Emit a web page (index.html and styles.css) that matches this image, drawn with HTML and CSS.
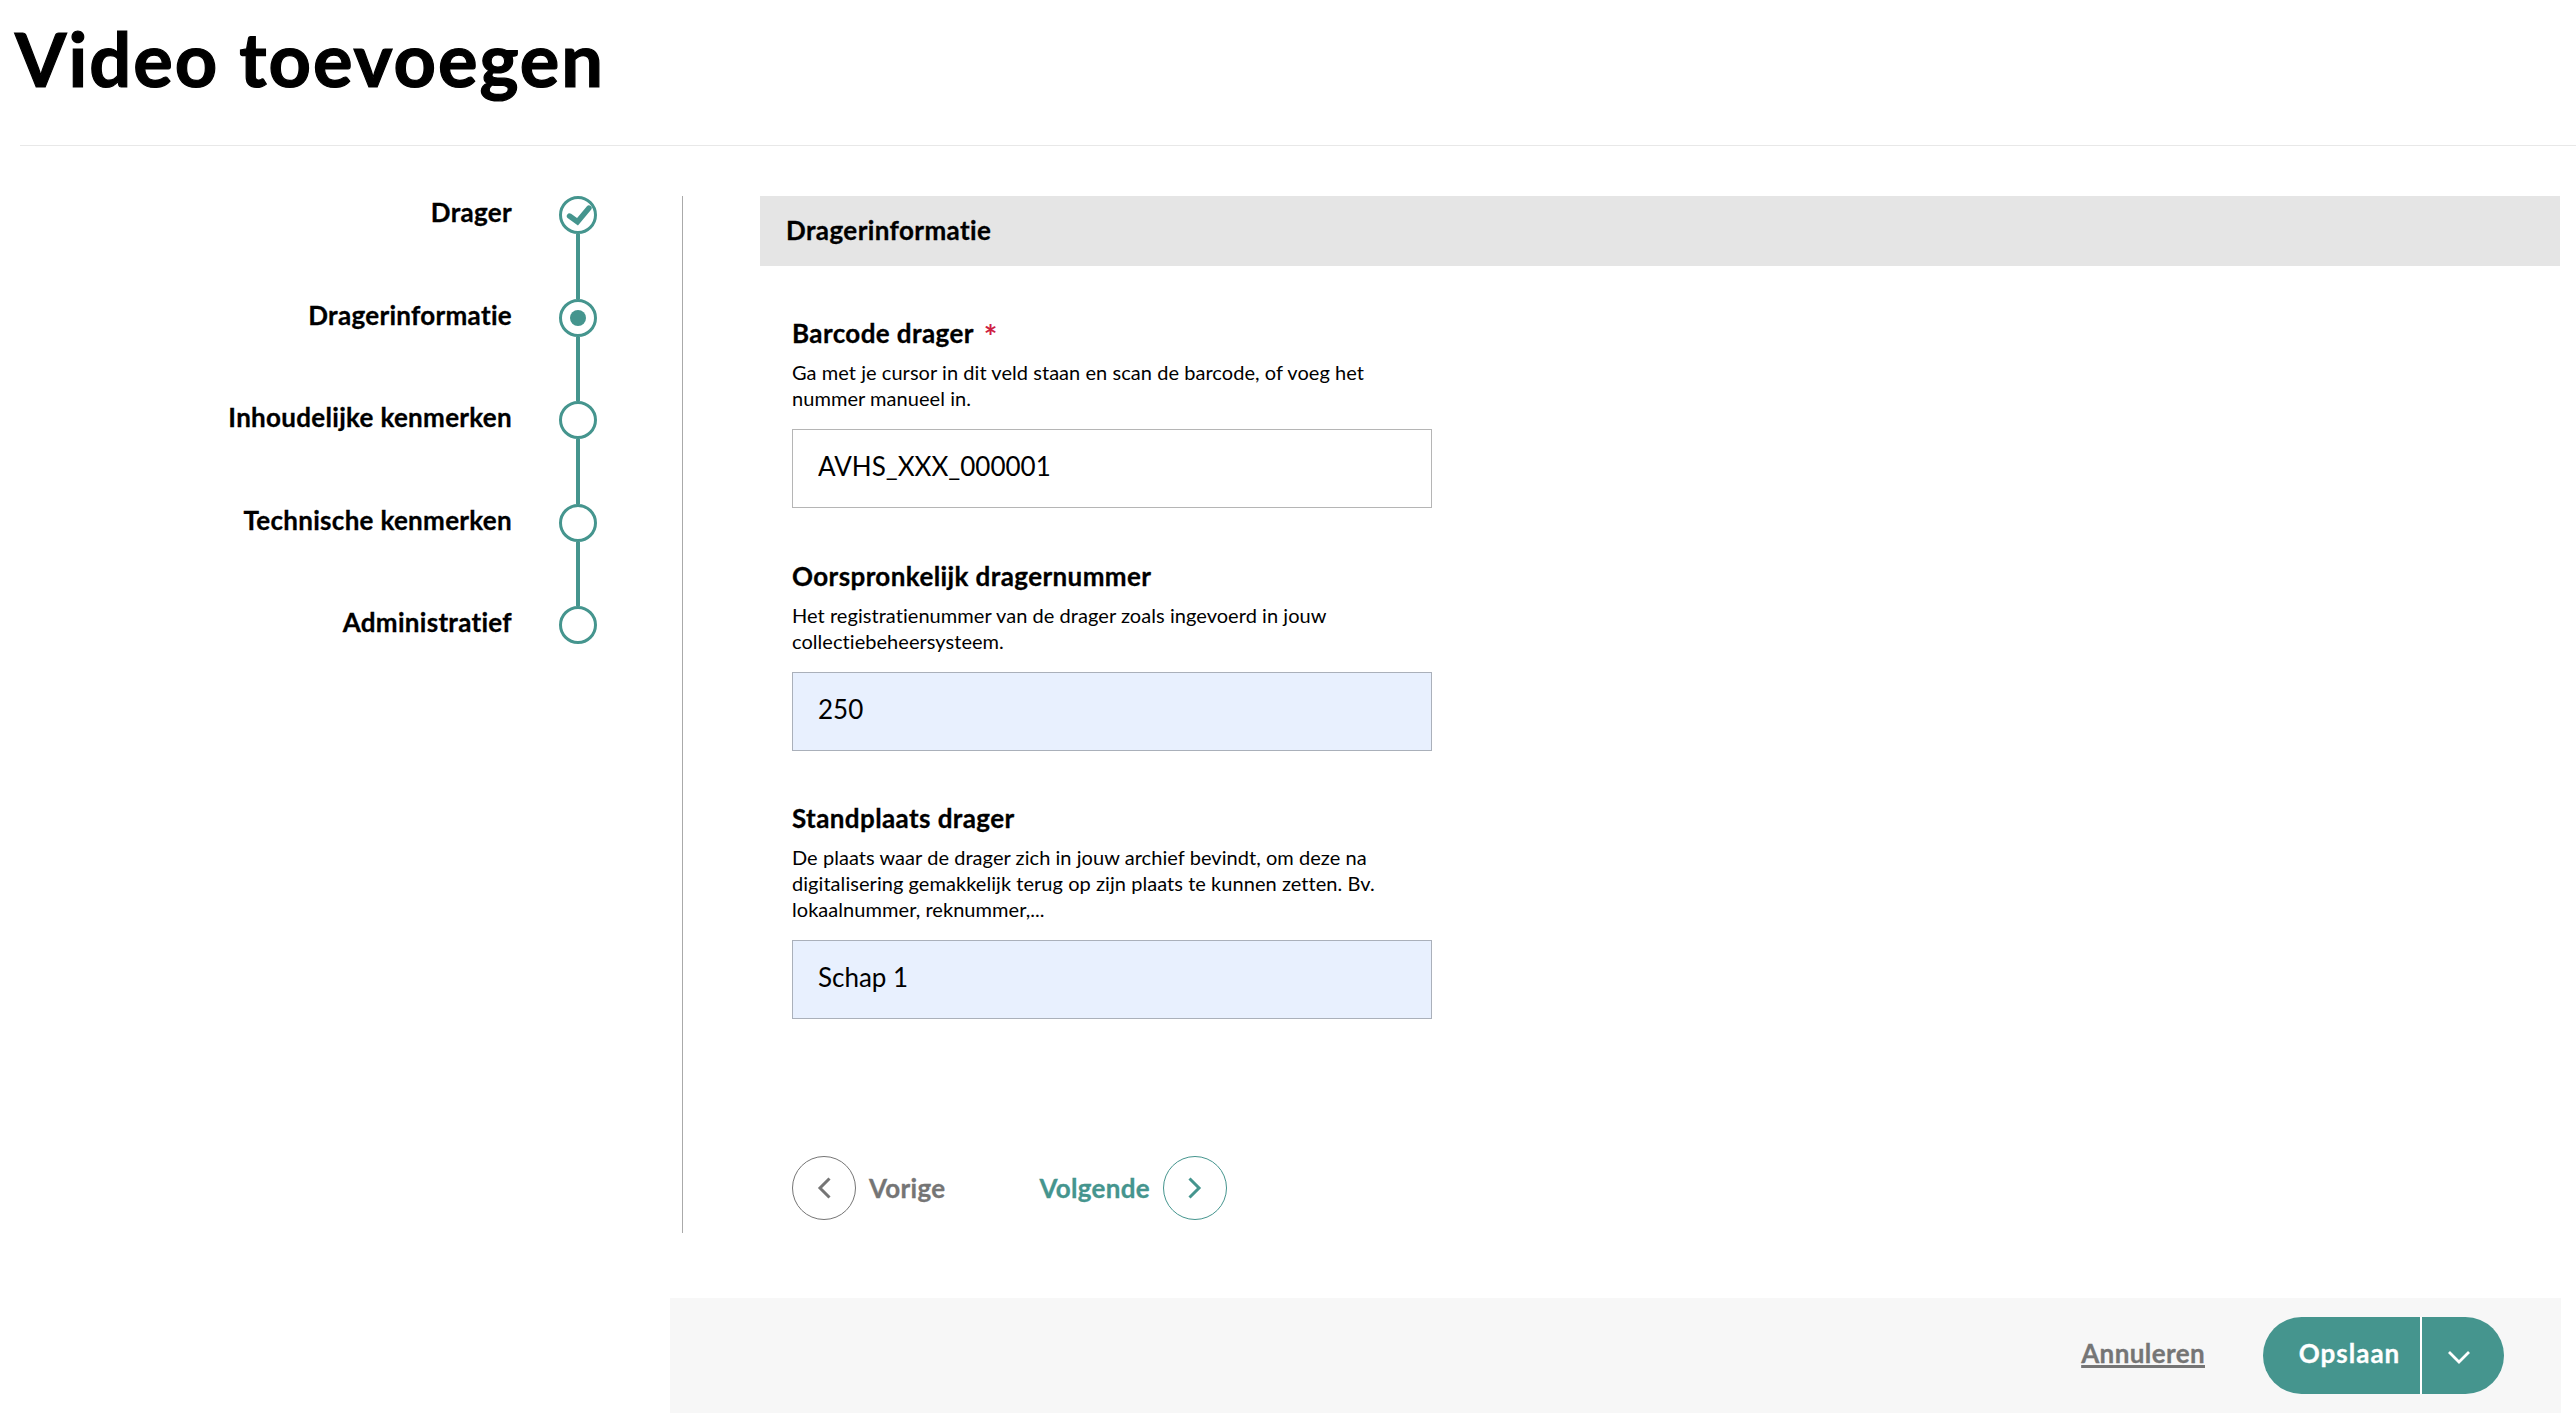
FILE: index.html
```html
<!DOCTYPE html>
<html lang="nl">
<head>
  <meta charset="UTF-8">
  <title>Video toevoegen</title>
  <link rel="stylesheet" href="styles.css">
</head>
<body>
  <header class="page-header">
    <h1>Video toevoegen</h1>
  </header>
  <div class="layout">
    <ol class="steps">
      <li class="step">
        <span class="step-label">Drager</span>
        <span class="step-track">
          <span class="step-dot">
            <svg width="32" height="32" viewBox="3 3 32 32"><path d="M10.5 20l8 5.8L30 12" fill="none" stroke="#45958e" stroke-width="5.4" stroke-linecap="round" stroke-linejoin="miter"/></svg>
          </span>
          <span class="step-line"></span>
        </span>
      </li>
      <li class="step">
        <span class="step-label">Dragerinformatie</span>
        <span class="step-track">
          <span class="step-dot"><span class="step-current"></span></span>
          <span class="step-line"></span>
        </span>
      </li>
      <li class="step">
        <span class="step-label">Inhoudelijke kenmerken</span>
        <span class="step-track">
          <span class="step-dot"></span>
          <span class="step-line"></span>
        </span>
      </li>
      <li class="step">
        <span class="step-label">Technische kenmerken</span>
        <span class="step-track">
          <span class="step-dot"></span>
          <span class="step-line"></span>
        </span>
      </li>
      <li class="step step-last">
        <span class="step-label">Administratief</span>
        <span class="step-track">
          <span class="step-dot"></span>
        </span>
      </li>
    </ol>
    <main class="form-col">
      <h2 class="section-title">Dragerinformatie</h2>
      <div class="fields">
        <div class="field">
          <label class="field-label">Barcode drager <span class="req">*</span></label>
          <p class="field-help">Ga met je cursor in dit veld staan en scan de barcode, of voeg het<br>nummer manueel in.</p>
          <input class="field-input" type="text" value="AVHS_XXX_000001">
        </div>
        <div class="field">
          <label class="field-label">Oorspronkelijk dragernummer</label>
          <p class="field-help">Het registratienummer van de drager zoals ingevoerd in jouw<br>collectiebeheersysteem.</p>
          <input class="field-input filled" type="text" value="250">
        </div>
        <div class="field">
          <label class="field-label">Standplaats drager</label>
          <p class="field-help">De plaats waar de drager zich in jouw archief bevindt, om deze na<br>digitalisering gemakkelijk terug op zijn plaats te kunnen zetten. Bv.<br>lokaalnummer, reknummer,...</p>
          <input class="field-input filled" type="text" value="Schap 1">
        </div>
        <nav class="pager">
          <a class="pager-link prev">
            <span class="pager-circle">
              <svg width="14" height="24" viewBox="0 0 14 24"><path d="M12.5 2.5L3 12l9.5 9.5" fill="none" stroke="#757575" stroke-width="3"/></svg>
            </span>
            Vorige
          </a>
          <a class="pager-link next">
            Volgende
            <span class="pager-circle">
              <svg width="14" height="24" viewBox="0 0 14 24"><path d="M1.5 2.5L11 12l-9.5 9.5" fill="none" stroke="#45958e" stroke-width="3"/></svg>
            </span>
          </a>
        </nav>
      </div>
    </main>
  </div>
  <footer class="actions">
    <a class="cancel">Annuleren</a>
    <div class="save-group">
      <button class="save-btn">Opslaan</button>
      <button class="save-more">
        <svg width="24" height="14" viewBox="0 0 24 14"><path d="M2 2l10 10L22 2" fill="none" stroke="#fff" stroke-width="2.8"/></svg>
      </button>
    </div>
  </footer>
</body>
</html>
```

FILE: styles.css
```css
* { margin: 0; padding: 0; box-sizing: border-box; }
html, body { height: 100%; }
body { background: #fff; color: #000; font-family: 'Lato', sans-serif; overflow: hidden; }

.page-header { height: 146px; margin-left: 20px; border-bottom: 1px solid #e8e8e8; }
h1 { font-size: 74px; font-weight: 700; line-height: 90px; margin-left: -5px; padding-top: 14px; letter-spacing: 2px; -webkit-text-stroke: 1.2px #000; }

.layout { display: flex; padding-top: 50px; padding-right: 16px; }

.steps { list-style: none; width: 682px; padding-right: 85px; }
.step { display: flex; justify-content: flex-end; gap: 47px; height: 102.5px; }
.step-last { height: 38px; }
.step-label { padding-top: 1px; font-size: 26px; font-weight: 700; line-height: 30px; letter-spacing: 0.3px; -webkit-text-stroke: 0.3px #000; }
.step-track { display: flex; flex-direction: column; align-items: center; width: 38px; }
.step-dot { display: flex; align-items: center; justify-content: center; flex: none; width: 38px; height: 38px; border: 3.5px solid #45958e; border-radius: 50%; }
.step-current { width: 16px; height: 16px; border-radius: 50%; background: #45958e; }
.step-line { flex: 1; width: 3.5px; background: #45958e; }

.form-col { flex: 1; height: 1037px; border-left: 1px solid #aaa; padding-left: 77px; }
.section-title { height: 70px; padding: 19px 26px 21px; background: #e5e5e5; font-size: 26px; font-weight: 700; line-height: 30px; letter-spacing: 0.4px; -webkit-text-stroke: 0.3px #000; }

.fields { padding: 52px 0 0 32px; }
.field { width: 640px; margin-bottom: 52.5px; }
.field-label { display: flex; gap: 10px; font-size: 26px; font-weight: 700; line-height: 30px; letter-spacing: 0.4px; -webkit-text-stroke: 0.3px #000; }
.req { height: 30px; color: #cf1f43; font-size: 32px; line-height: 38px; -webkit-text-stroke: 0; }
.field-help { margin-top: 11px; font-size: 20px; line-height: 26px; letter-spacing: 0.05px; }
.field-input { display: block; width: 640px; height: 79px; margin-top: 18px; padding: 0 25px 5px; border: 1px solid #b5b5b5; background: #fff; color: #000; font-family: inherit; font-size: 26px; outline: none; }
.field-input.filled { background: #e8f0fe; border-color: #aab0ba; }

.pager { display: flex; gap: 94px; margin-top: 137px; font-size: 26px; font-weight: 700; letter-spacing: 0.3px; -webkit-text-stroke: 0.3px currentColor; }
.pager-link { display: flex; align-items: center; gap: 13px; }
.pager-circle { display: flex; align-items: center; justify-content: center; width: 64px; height: 64px; border: 1px solid currentColor; border-radius: 50%; }
.prev { color: #757575; }
.next { color: #45958e; }

.actions { display: flex; align-items: center; justify-content: flex-end; gap: 58px; height: 115px; margin: 65px 15px 0 670px; padding-right: 57px; background: #f7f7f7; }
.cancel { padding-bottom: 6px; color: #757575; font-size: 26px; font-weight: 700; letter-spacing: 0.4px; text-decoration: underline; text-decoration-thickness: 3px; -webkit-text-stroke: 0.3px #757575; }
.save-group { display: flex; width: 241px; height: 77px; border-radius: 39px; overflow: hidden; }
.save-btn, .save-more { border: none; background: #45958e; color: #fff; font-family: inherit; font-size: 26px; font-weight: 700; }
.save-btn { width: 159px; padding: 0 0 5px 16px; border-right: 2px solid #fff; letter-spacing: 1px; -webkit-text-stroke: 0.3px #fff; }
.save-more { flex: 1; padding: 0 9px 3px 0; }
```
